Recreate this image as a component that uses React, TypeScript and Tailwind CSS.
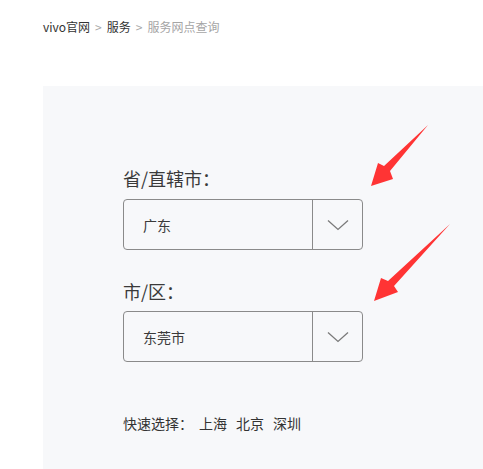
import React from "react";

function Chevron() {
  return (
    <svg width="22" height="12" viewBox="0 0 22 12" fill="none">
      <path d="M1 1.5 L11 10.5 L21 1.5" stroke="#7a7a7a" strokeWidth="1.3" />
    </svg>
  );
}

function SelectBox({ value }: { value: string }) {
  return (
    <div className="flex h-[51px] w-[240px] rounded-[4px] border border-[#8a8a8a]">
      <div className="flex flex-1 items-center pl-[19px] text-[14px] leading-[20px] text-[#3a3a3a]">
        {value}
      </div>
      <div className="flex w-[50px] items-center justify-center border-l border-[#8a8a8a]">
        <Chevron />
      </div>
    </div>
  );
}

export default function App() {
  return (
    <div
      className="relative h-[469px] w-[483px] overflow-hidden bg-white"
      style={{ fontFamily: '"Noto Sans CJK SC", "Noto Sans", sans-serif' }}
    >
      <div className="flex items-center pl-[43px] pt-[19px] text-[12px] leading-[16px]">
        <span className="text-[#333]">vivo官网</span>
        <span className="mx-[5px] text-[#aaa]">&gt;</span>
        <span className="text-[#333]">服务</span>
        <span className="mx-[5px] text-[#aaa]">&gt;</span>
        <span className="text-[#a5a5a5]">服务网点查询</span>
      </div>
      <div className="ml-[43px] mt-[51px] h-[383px] bg-[#f7f8fa] pl-[80px] pt-[80px]">
        <div className="text-[18px] leading-[24px] text-[#3a3a3a]">省/直辖市：</div>
        <div className="mt-[9px]">
          <SelectBox value="广东" />
        </div>
        <div className="mt-[29px] text-[18px] leading-[24px] text-[#3a3a3a]">市/区：</div>
        <div className="mt-[8px]">
          <SelectBox value="东莞市" />
        </div>
        <div className="mt-[51px] flex items-center text-[14px] leading-[20px] text-[#333]">
          <span>快速选择：</span>
          <div className="ml-[6px] flex gap-[9px]">
            <span>上海</span>
            <span>北京</span>
            <span>深圳</span>
          </div>
        </div>
      </div>
      <svg
        className="pointer-events-none absolute left-0 top-0"
        width="483"
        height="469"
        viewBox="0 0 483 469"
      >
        <polygon
          points="428,125 390,171 393,179 371,186 378,163 384,166"
          fill="#ff3434"
        />
        <polygon
          points="450,224 394,286 398,292 374,301 381,278 388,281"
          fill="#ff3434"
        />
      </svg>
    </div>
  );
}
